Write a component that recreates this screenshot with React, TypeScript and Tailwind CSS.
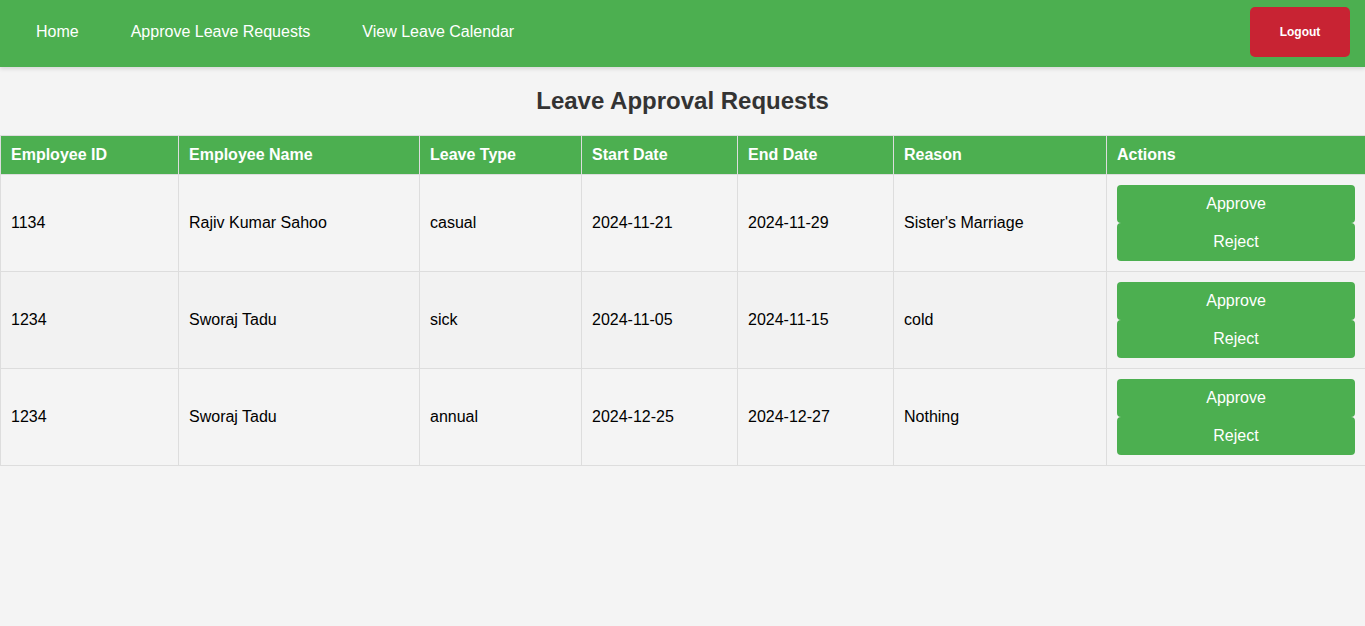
const rows = [
  { id: '1134', name: 'Rajiv Kumar Sahoo', type: 'casual', start: '2024-11-21', end: '2024-11-29', reason: "Sister's Marriage" },
  { id: '1234', name: 'Sworaj Tadu', type: 'sick', start: '2024-11-05', end: '2024-11-15', reason: 'cold' },
  { id: '1234', name: 'Sworaj Tadu', type: 'annual', start: '2024-12-25', end: '2024-12-27', reason: 'Nothing' },
];

const heads = [
  { label: 'Employee ID', w: 'w-[178px]' },
  { label: 'Employee Name', w: 'w-[241px]' },
  { label: 'Leave Type', w: 'w-[162px]' },
  { label: 'Start Date', w: 'w-[156px]' },
  { label: 'End Date', w: 'w-[156px]' },
  { label: 'Reason', w: 'w-[213px]' },
  { label: 'Actions', w: 'w-[259px]' },
];

export default function App() {
  return (
    <div className="min-h-[626px] bg-[#f4f4f4] font-['Liberation_Sans',Arial,sans-serif]">
      <nav className="flex items-center justify-between bg-[#4caf50] pt-[7px] pb-[10px] pl-5 pr-[15px] shadow-[0_2px_4px_rgba(0,0,0,0.12)]">
        <div className="flex items-center gap-5">
          <a className="px-4 text-base text-white">Home</a>
          <a className="px-4 text-base text-white">Approve Leave Requests</a>
          <a className="px-4 text-base text-white">View Leave Calendar</a>
        </div>
        <button className="h-[50px] w-[100px] rounded-[5px] bg-[#c82333] text-[12px] font-bold text-white">Logout</button>
      </nav>

      <h2 className="my-5 text-center text-2xl leading-7 font-bold text-[#333]">Leave Approval Requests</h2>

      <table className="w-full table-fixed border-collapse">
        <thead>
          <tr className="bg-[#4caf50]">
            {heads.map(h => (
              <th key={h.label} className={`${h.w} border border-[#ddd] px-[10px] py-[10px] text-left text-base leading-[18px] font-bold text-white`}>{h.label}</th>
            ))}
          </tr>
        </thead>
        <tbody>
          {rows.map((r, i) => (
            <tr key={i} className={i % 2 === 1 ? 'bg-[#f2f2f2]' : ''}>
              {[r.id, r.name, r.type, r.start, r.end, r.reason].map((v, j) => (
                <td key={j} className="border border-[#ddd] px-[10px] py-[10px] text-base leading-[18px] text-black">{v}</td>
              ))}
              <td className="border border-[#ddd] p-[10px]">
                <button className="block h-[38px] w-full rounded-[4px] bg-[#4caf50] text-base text-white">Approve</button>
                <button className="block h-[38px] w-full rounded-[4px] bg-[#4caf50] text-base text-white">Reject</button>
              </td>
            </tr>
          ))}
        </tbody>
      </table>
    </div>
  );
}
